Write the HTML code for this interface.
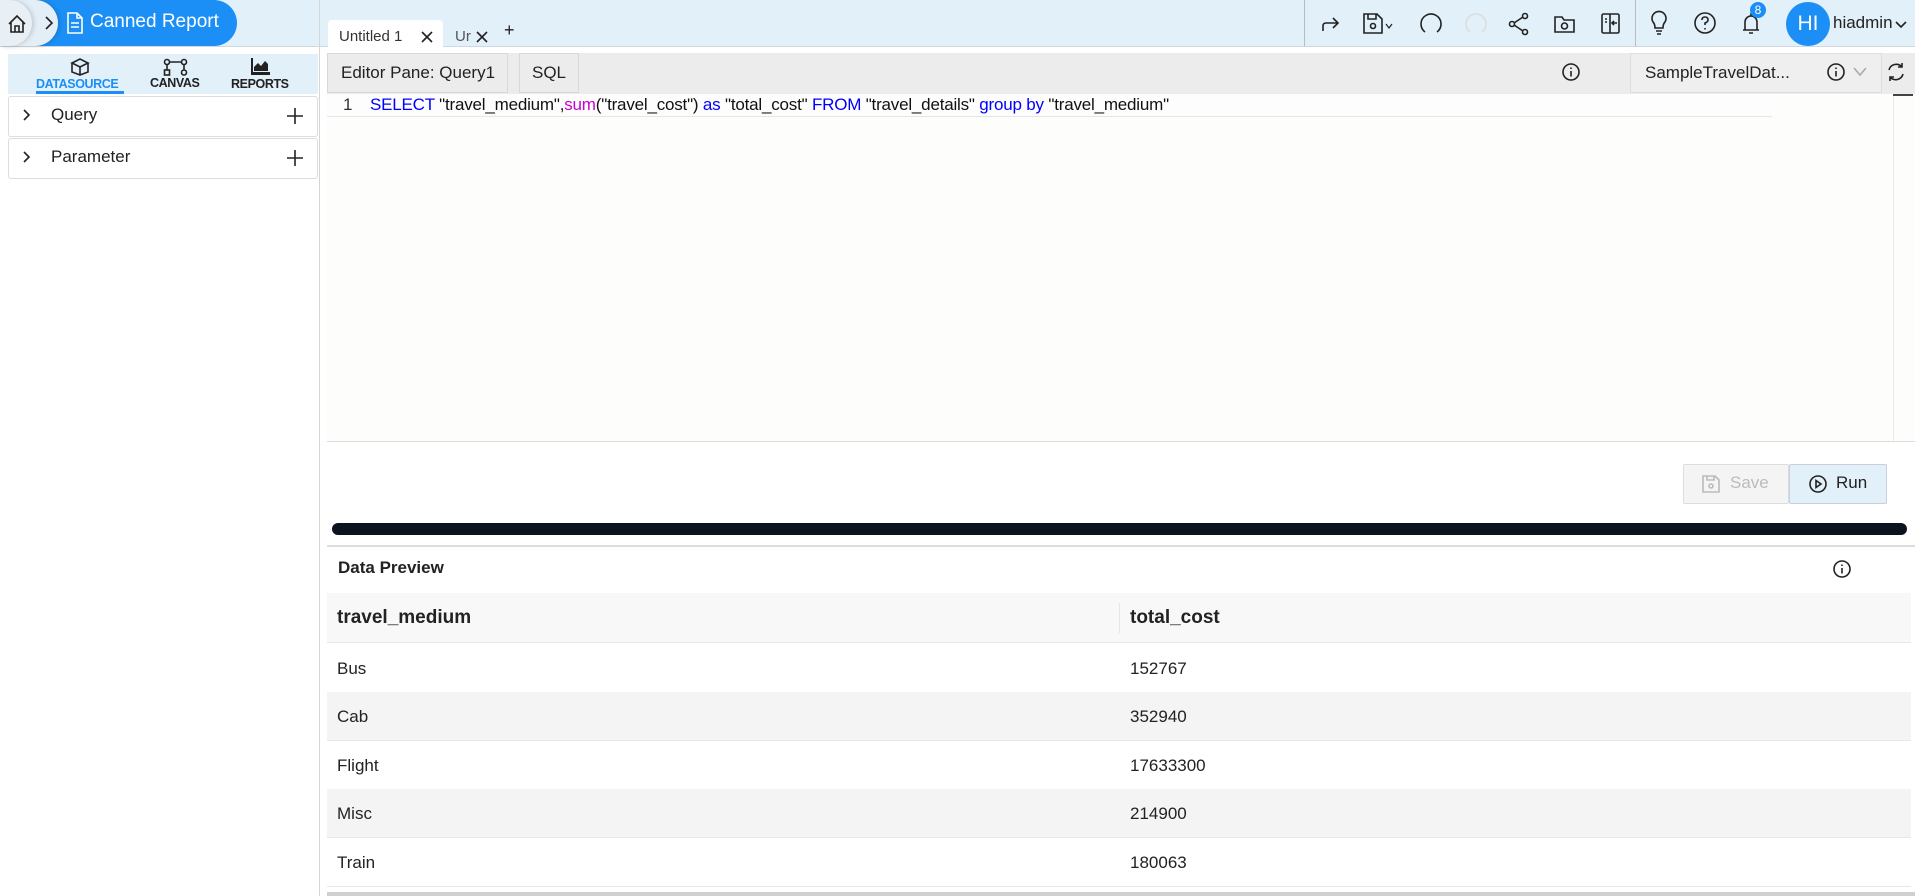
<!DOCTYPE html>
<html><head><meta charset="utf-8"><style>
*{box-sizing:border-box;margin:0;padding:0}
body{width:1915px;height:896px;overflow:hidden;background:#fff;font-family:"Liberation Sans",sans-serif;color:#222;position:relative}
.a{position:absolute}
svg{position:absolute;fill:none;stroke:#222;stroke-width:1.6}
.row{position:absolute;left:327px;width:1584px;height:49px;font-size:17px;line-height:49px}
.row span{position:absolute}
</style></head><body>
<!-- top bar -->
<div class="a" style="left:0;top:0;width:1915px;height:47px;background:#e1f0f9;border-bottom:1px solid #cfd8de"></div>
<div class="a" style="left:319px;top:0;width:1px;height:896px;background:#d6d6d6"></div>
<div class="a" style="left:0;top:0;width:237px;height:46px;background:#1b8ff5;border-radius:0 23px 23px 0"></div>
<div class="a" style="left:0;top:0;width:58px;height:46px;background:#e3eef6;border-radius:0 23px 23px 0;box-shadow:2px 0 4px rgba(0,0,0,.15)"></div>
<div class="a" style="left:0;top:0;width:32px;height:46px;background:#e8eff5;border-radius:0 23px 23px 0;box-shadow:2px 0 4px rgba(0,0,0,.15)"></div>
<svg style="left:6px;top:13px" width="22" height="22" viewBox="0 0 22 22"><path d="M3 11 L11 3 L19 11 M5 9 V19 H17 V9 M9 19 V13 H13 V19"/></svg>
<svg style="left:42px;top:15px" width="14" height="16"><path d="M4 2 L10 8 L4 14"/></svg>
<svg style="left:66px;top:12px;stroke:#fff" width="18" height="22"><path d="M2 1 H11 L16 6 V21 H2 Z M11 1 V6 H16 M5 11 H13 M5 15 H13"/></svg>
<div class="a" style="left:90px;top:11px;color:#fff;font-size:19px">Canned Report</div>
<!-- tabs -->
<div class="a" style="left:328px;top:20px;width:115px;height:27px;background:#fff;border-radius:4px 4px 0 0"></div>
<div class="a" style="left:339px;top:28px;font-size:15px;color:#333">Untitled 1</div>
<svg style="left:420px;top:30px" width="14" height="14"><path d="M2 2 L12 12 M12 2 L2 12"/></svg>
<div class="a" style="left:455px;top:28px;font-size:15px;color:#555">Ur</div>
<svg style="left:475px;top:30px" width="14" height="14"><path d="M2 2 L12 12 M12 2 L2 12"/></svg>
<div class="a" style="left:504px;top:20px;font-size:18px">+</div>
<!-- right toolbar -->
<div class="a" style="left:1304px;top:0;width:1px;height:46px;background:#bbb"></div>
<div class="a" style="left:1635px;top:0;width:1px;height:46px;background:#bbb"></div>
<svg style="left:1320px;top:14px" width="22" height="20"><path d="M3 17 V12 Q3 9 6 9 H18 M13 4 L18 9 L13 14"/></svg>
<svg style="left:1362px;top:12px" width="34" height="24"><path d="M2 2 H15 L20 7 V21 H2 Z M6 2 V7 H14 V2"/><circle cx="11" cy="14" r="2.5"/><path d="M24 12 L27 16 L30 12" stroke-width="1.2"/></svg>
<svg style="left:1419px;top:12px" width="24" height="24" stroke-width="2.4"><path d="M6 20 Q2 17 2 12 A10 10 0 1 1 18 20"/></svg>
<svg style="left:1464px;top:12px;stroke:#ddd" width="24" height="24" stroke-width="2.4"><path d="M6 20 Q2 17 2 12 A10 10 0 1 1 18 20"/></svg>
<svg style="left:1508px;top:12px" width="22" height="24" stroke-width="1.4"><circle cx="17" cy="4" r="2.5"/><circle cx="4" cy="12" r="2.5"/><circle cx="17" cy="20" r="2.5"/><path d="M6 11 L15 5 M6 13 L15 19"/></svg>
<svg style="left:1553px;top:13px" width="24" height="22"><path d="M2 4 H9 L11 7 H21 V19 H2 Z"/><circle cx="11.5" cy="13" r="3"/></svg>
<svg style="left:1600px;top:12px" width="22" height="24"><rect x="2" y="2" width="17" height="19" rx="1.5"/><path d="M10 2 V21 M5 7 H7 M5 10 H7 M17 11 H12 M14 9 L12 11 L14 13"/></svg>
<svg style="left:1649px;top:10px" width="20" height="26"><path d="M6 18 Q6 14 4 12 A7 7 0 1 1 16 12 Q14 14 14 18 Z M7 21 H13 M8 24 H12"/></svg>
<svg style="left:1693px;top:11px" width="24" height="24"><circle cx="12" cy="12" r="10"/><path d="M9 9 Q9 6 12 6 Q15 6 15 9 Q15 11 12 12 V14 M12 17 V18.5"/></svg>
<svg style="left:1741px;top:11px" width="20" height="26"><path d="M4 19 V11 A6 6 0 0 1 16 11 V19 H18 H2 Z M8 22 H12 M10 2 V5"/></svg>
<div class="a" style="left:1750px;top:2px;width:16px;height:16px;border-radius:8px;background:#1b8ff5;color:#fff;font-size:12px;text-align:center;line-height:16px">8</div>
<div class="a" style="left:1786px;top:2px;width:44px;height:44px;border-radius:22px;background:#1b8ff5;color:#fff;font-size:21px;text-align:center;line-height:44px">HI</div>
<div class="a" style="left:1833px;top:13px;font-size:17px">hiadmin</div>
<svg style="left:1895px;top:20px" width="12" height="10" stroke-width="1.2"><path d="M1 2 L6 7 L11 2"/></svg>
<!-- left sidebar -->
<div class="a" style="left:8px;top:54px;width:310px;height:40px;background:#e1f0f9"></div>
<svg style="left:70px;top:58px" width="20" height="18" stroke-width="1.1"><path d="M2 5 L10 1 L18 5 L10 9 Z M2 5 V14 L10 17 L18 14 V5 M10 9 V17"/></svg>
<div class="a" style="left:36px;top:77px;font-size:12.5px;font-weight:bold;color:#1b8ff5;letter-spacing:-.4px">DATASOURCE</div>
<div class="a" style="left:36px;top:91px;width:88px;height:3px;background:#1b8ff5"></div>
<svg style="left:163px;top:58px" width="26" height="18" stroke-width="1.1"><circle cx="4" cy="4" r="2.5"/><circle cx="21" cy="4" r="2.5"/><rect x="1.5" y="12" width="5" height="5"/><circle cx="21" cy="14.5" r="2.5"/><path d="M7 4 H18 M4 7 V12 M21 7 V12"/></svg>
<div class="a" style="left:150px;top:76px;font-size:12.5px;font-weight:bold;letter-spacing:-.4px">CANVAS</div>
<svg style="left:250px;top:58px;fill:#222;stroke:none" width="20" height="17"><path d="M1 0 H3 V14 H20 V17 H1 Z M4 13 V9 L8 5 L11 8 L15 3 L18 6 V13 Z"/></svg>
<div class="a" style="left:231px;top:77px;font-size:12.5px;font-weight:bold;letter-spacing:-.4px">REPORTS</div>
<div class="a" style="left:8px;top:96px;width:310px;height:41px;border:1px solid #ddd;border-radius:3px"></div>
<div class="a" style="left:8px;top:138px;width:310px;height:41px;border:1px solid #ddd;border-radius:3px"></div>
<svg style="left:22px;top:108px" width="10" height="14" stroke-width="1.3"><path d="M2 2 L7 7 L2 12"/></svg>
<svg style="left:22px;top:150px" width="10" height="14" stroke-width="1.3"><path d="M2 2 L7 7 L2 12"/></svg>
<div class="a" style="left:51px;top:105px;font-size:17px">Query</div>
<div class="a" style="left:51px;top:147px;font-size:17px">Parameter</div>
<svg style="left:287px;top:108px" width="16" height="16" stroke-width="1.5"><path d="M8 0 V16 M0 8 H16"/></svg>
<svg style="left:287px;top:150px" width="16" height="16" stroke-width="1.5"><path d="M8 0 V16 M0 8 H16"/></svg>
<!-- editor toolbar -->
<div class="a" style="left:327px;top:53px;width:1588px;height:41px;background:#ececec"></div>
<div class="a" style="left:327px;top:53px;width:181px;height:40px;border:1px solid #d8d8d8;font-size:17px;line-height:38px;padding-left:13px;white-space:nowrap">Editor Pane: Query1</div>
<div class="a" style="left:519px;top:53px;width:60px;height:40px;border:1px solid #d8d8d8;font-size:17px;line-height:38px;text-align:center">SQL</div>
<svg style="left:1561px;top:62px" width="20" height="20" stroke-width="1.4"><circle cx="10" cy="10" r="8"/><path d="M10 9 V14.5 M10 5.5 V7"/></svg>
<div class="a" style="left:1630px;top:53px;width:252px;height:40px;border:1px solid #ddd;background:#efefef"></div>
<div class="a" style="left:1645px;top:63px;font-size:17px">SampleTravelDat...</div>
<svg style="left:1826px;top:62px" width="20" height="20" stroke-width="1.4"><circle cx="10" cy="10" r="8"/><path d="M10 9 V14.5 M10 5.5 V7"/></svg>
<svg style="left:1853px;top:67px;stroke:#aaa" width="14" height="10" stroke-width="1.2"><path d="M1 1 L7 8 L13 1"/></svg>
<svg style="left:1886px;top:62px" width="20" height="20" stroke-width="1.8"><path d="M3 8 A7.5 7.5 0 0 1 16 5 M17 12 A7.5 7.5 0 0 1 4 15 M16 1 V5 H12 M4 19 V15 H8"/></svg>
<!-- code -->
<div class="a" style="left:327px;top:94px;width:1588px;height:348px;background:#fdfdfc"></div>
<div class="a" style="left:327px;top:94px;width:1445px;height:23px;border-bottom:1px solid #e6e6e6;background:#fdfdfd"></div>
<div class="a" style="left:343px;top:95px;font-size:17px;color:#333">1</div>
<div class="a" style="left:370px;top:95px;height:22px;overflow:hidden;font-size:17px;white-space:pre;color:#111;letter-spacing:-.2px"><span style="color:#00f">SELECT</span> "travel_medium",<span style="color:#c0c">sum</span>("travel_cost") <span style="color:#00f">as</span> "total_cost" <span style="color:#00f">FROM</span> "travel_details" <span style="color:#00f">group by</span> "travel_medium"</div>
<div class="a" style="left:1893px;top:94px;width:1px;height:348px;background:#e8e8e8"></div>
<div class="a" style="left:1893px;top:94px;width:20px;height:2px;background:#444"></div>
<div class="a" style="left:327px;top:441px;width:1588px;height:1px;background:#ddd"></div>
<!-- buttons -->
<div class="a" style="left:1683px;top:464px;width:106px;height:40px;border:1px solid #ddd;background:#f4f4f4;border-radius:2px"></div>
<svg style="left:1702px;top:475px;stroke:#bbb" width="18" height="18" stroke-width="1.4"><path d="M1 1 H13 L17 5 V17 H1 Z M5 1 V5 H12 V1"/><circle cx="9" cy="11" r="2"/></svg>
<div class="a" style="left:1730px;top:473px;font-size:17px;color:#bbb">Save</div>
<div class="a" style="left:1789px;top:464px;width:98px;height:40px;border:1px solid #ccd;background:#e1f0f9;border-radius:2px"></div>
<svg style="left:1808px;top:474px" width="20" height="20" stroke-width="1.5"><circle cx="10" cy="10" r="8"/><path d="M8 6.5 V13.5 L13 10 Z"/></svg>
<div class="a" style="left:1836px;top:473px;font-size:17px">Run</div>
<!-- splitter -->
<div class="a" style="left:332px;top:523px;width:1575px;height:12px;background:#0b1220;border-radius:6px"></div>
<div class="a" style="left:327px;top:545px;width:1588px;height:2px;background:#ddd"></div>
<div class="a" style="left:338px;top:558px;font-size:17px;font-weight:bold">Data Preview</div>
<svg style="left:1832px;top:559px" width="20" height="20" stroke-width="1.4"><circle cx="10" cy="10" r="8"/><path d="M10 9 V14.5 M10 5.5 V7"/></svg>
<!-- table -->
<div class="row" style="top:593px;height:50px;background:#f8f8f8;border-bottom:1px solid #e8e8e8;font-weight:bold;font-size:19px;line-height:50px"><span style="left:10px">travel_medium</span><span style="left:792px;top:10px;height:30px;width:1px;background:#e6e6e6"></span><span style="left:803px">total_cost</span></div>
<div class="row" style="top:644px;border-bottom:1px solid #e8e8e8"><span style="left:10px">Bus</span><span style="left:803px">152767</span></div>
<div class="row" style="top:692px;background:#f4f4f4;border-bottom:1px solid #e8e8e8"><span style="left:10px">Cab</span><span style="left:803px">352940</span></div>
<div class="row" style="top:741px;border-bottom:1px solid #e8e8e8"><span style="left:10px">Flight</span><span style="left:803px">17633300</span></div>
<div class="row" style="top:789px;background:#f4f4f4;border-bottom:1px solid #e8e8e8"><span style="left:10px">Misc</span><span style="left:803px">214900</span></div>
<div class="row" style="top:838px;border-bottom:1px solid #e8e8e8"><span style="left:10px">Train</span><span style="left:803px">180063</span></div>
<div class="a" style="left:327px;top:892px;width:1588px;height:4px;background:#d0d0d0"></div>
</body></html>
